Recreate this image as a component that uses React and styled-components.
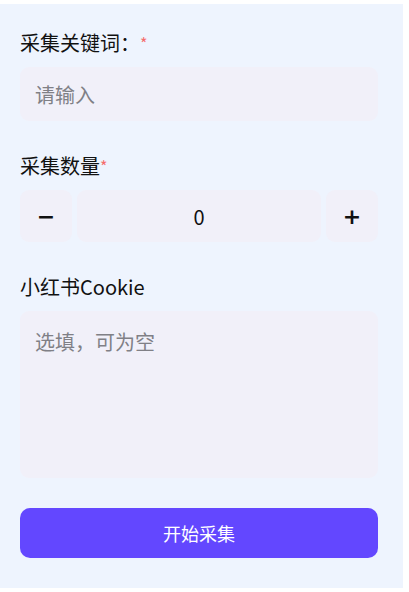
import React, { useState } from "react";
import styled, { createGlobalStyle } from "styled-components";

const GlobalStyle = createGlobalStyle`
  body {
    margin: 0;
    background: #ffffff;
    font-family: "Noto Sans CJK SC", "Noto Sans", sans-serif;
  }
`;

const Panel = styled.div`
  margin-top: 4px;
  width: 403px;
  height: 584px;
  box-sizing: border-box;
  background: #eef4fe;
  padding: 27px 25px 0 20px;
  display: flex;
  flex-direction: column;
`;

const Field = styled.div`
  display: flex;
  flex-direction: column;
  gap: 12px;
  margin-bottom: 33px;
`;

const Label = styled.div`
  font-size: 20px;
  line-height: 24px;
  color: #111;
`;

const Star = styled.span`
  color: #f56c6c;
  font-size: 16px;
  vertical-align: top;
`;

const TextInput = styled.input`
  height: 54px;
  box-sizing: border-box;
  border: none;
  outline: none;
  border-radius: 9px;
  background: #f1f0f9;
  padding: 0 15px;
  font-family: inherit;
  font-size: 20px;
  color: #111;
  &::placeholder {
    color: #808086;
  }
`;

const Stepper = styled.div`
  display: flex;
  gap: 5px;
  height: 52px;
`;

const StepButton = styled.button`
  width: 52px;
  flex: none;
  border: none;
  border-radius: 9px;
  background: #f1f0f9;
  font-family: "DejaVu Sans", sans-serif;
  font-size: 22px;
  font-weight: bold;
  color: #111;
  display: flex;
  align-items: center;
  justify-content: center;
  padding: 0;
  cursor: pointer;
`;

const CountInput = styled.input`
  flex: 1;
  min-width: 0;
  border: none;
  outline: none;
  border-radius: 9px;
  background: #f1f0f9;
  text-align: center;
  font-family: inherit;
  font-size: 20px;
  color: #111;
`;

const TextArea = styled.textarea`
  height: 167px;
  box-sizing: border-box;
  border: none;
  outline: none;
  resize: none;
  border-radius: 9px;
  background: #f1f0f9;
  padding: 17px 15px;
  font-family: inherit;
  font-size: 20px;
  line-height: 28px;
  color: #111;
  &::placeholder {
    color: #808086;
  }
`;

const Submit = styled.button`
  margin-top: -3px;
  height: 50px;
  border: none;
  border-radius: 10px;
  background: #6347ff;
  color: #fff;
  font-family: inherit;
  font-size: 18px;
  cursor: pointer;
`;

export default function App() {
  const [count, setCount] = useState(0);
  return (
    <>
      <GlobalStyle />
      <Panel>
        <Field>
          <Label>
            采集关键词：<Star>*</Star>
          </Label>
          <TextInput placeholder="请输入" />
        </Field>
        <Field>
          <Label>
            采集数量<Star>*</Star>
          </Label>
          <Stepper>
            <StepButton onClick={() => setCount(c => Math.max(0, c - 1))}>−</StepButton>
            <CountInput value={count} onChange={e => setCount(Number(e.target.value) || 0)} />
            <StepButton onClick={() => setCount(c => c + 1)}>+</StepButton>
          </Stepper>
        </Field>
        <Field>
          <Label>小红书Cookie</Label>
          <TextArea placeholder="选填，可为空" />
        </Field>
        <Submit>开始采集</Submit>
      </Panel>
    </>
  );
}
